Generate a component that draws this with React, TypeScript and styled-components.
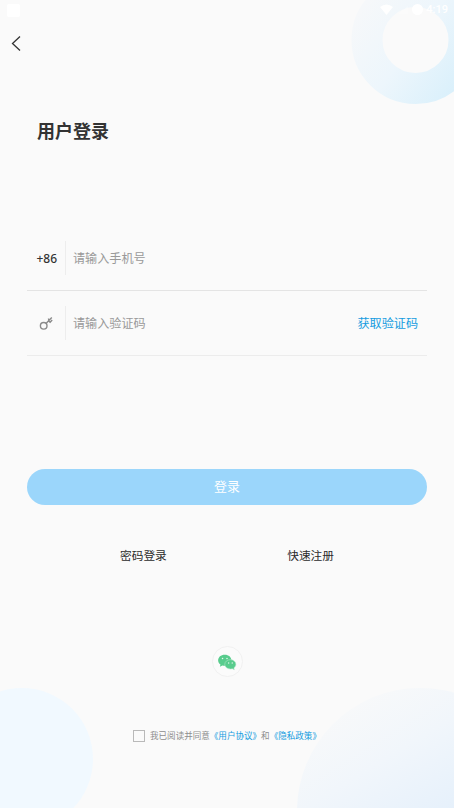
import React from 'react';
import styled, { createGlobalStyle } from 'styled-components';

const GlobalStyle = createGlobalStyle`
  * { box-sizing: border-box; }
  body {
    margin: 0;
    background: #fafafa;
    font-family: 'Noto Sans CJK SC', 'Noto Sans', sans-serif;
  }
  button, input { font-family: inherit; }
`;

const Screen = styled.main`
  position: relative;
  width: 100%;
  height: 808px;
  overflow: hidden;
  display: flex;
  flex-direction: column;
  background: #fafafa;
  color: #333;
`;

const Backdrop = styled.svg`
  position: absolute;
  inset: 0;
  pointer-events: none;
`;

const StatusBar = styled.header`
  position: relative;
  height: 20px;
  padding: 0 6px 0 7px;
  display: flex;
  align-items: center;
  justify-content: space-between;
  color: #fff;
`;

const AppBadge = styled.span`
  width: 13px;
  height: 13px;
  border-radius: 2px;
  background: #fff;
`;

const StatusIcons = styled.div`
  display: flex;
  align-items: center;
  font: 500 11px/18px Roboto, sans-serif;
`;

const NavBar = styled.nav`
  position: relative;
  height: 46px;
  padding: 15px 0 0 10px;
`;

const BackButton = styled.button`
  display: block;
  padding: 0;
  border: 0;
  background: none;
  line-height: 0;
  color: #333;
`;

const Title = styled.h1`
  position: relative;
  margin: 50px 0 0 37px;
  font-size: 18px;
  line-height: 28px;
  font-weight: 700;
`;

const Form = styled.form`
  position: relative;
  margin: 82px 27px 0;
`;

const Field = styled.div<{ $line: string }>`
  height: 65px;
  display: flex;
  align-items: center;
  border-bottom: 1px solid ${(p) => p.$line};
`;

const Prefix = styled.div`
  width: 39px;
  height: 34px;
  padding: 1px 0 0 9.500px;
  display: flex;
  align-items: center;
  border-right: 1px solid #ededed;
  font: 500 12px/18px 'Noto Sans', sans-serif;
`;

const Input = styled.input`
  flex: 1;
  min-width: 0;
  height: 34px;
  padding: 0 7px 2px;
  border: 0;
  outline: 0;
  background: none;
  font-size: 12.1px;
  color: #333;
  &::placeholder { color: #999; opacity: 1; }
`;

const CodeButton = styled.button`
  padding: 0 9px 0 0;
  border: 0;
  background: none;
  font-size: 12.1px;
  line-height: 18px;
  color: #159ce0;
`;

const LoginButton = styled.button`
  display: block;
  width: 100%;
  height: 36px;
  margin-top: 113px;
  padding: 0 0 3px;
  border: 0;
  border-radius: 18px;
  background: #9bd6fb;
  color: #fff;
  font-size: 13px;
`;

const Alternatives = styled.div`
  position: relative;
  margin: 40px 120px 0;
  display: flex;
  justify-content: space-between;
`;

const TextLink = styled.a`
  font-size: 11.7px;
  line-height: 20px;
  color: #2b2b2b;
`;

const WechatButton = styled.button`
  position: relative;
  align-self: center;
  width: 31px;
  height: 31px;
  margin-top: 81px;
  padding: 0;
  display: grid;
  place-items: center;
  border: 1px solid #f1f1f1;
  border-radius: 50%;
  background: #fbfbfb;
`;

const Agreement = styled.div`
  position: relative;
  margin: 50px 0 0 133px;
  height: 18px;
  display: flex;
  align-items: center;
  white-space: nowrap;
`;

const Checkbox = styled.span`
  width: 12px;
  height: 12px;
  margin-right: 5px;
  border: 1px solid #b9b9b9;
`;

const AgreementText = styled.span`
  padding-bottom: 2px;
  font-size: 8.55px;
  line-height: 14px;
  color: #8e8e8e;
`;

const PolicyLink = styled.a`
  color: #159ce0;
`;

const Decorations = () => (
  <Backdrop width="454" height="808" viewBox="0 0 454 808">
    <defs>
      <linearGradient id="ring" gradientUnits="userSpaceOnUse" x1="362" y1="8" x2="462" y2="80">
        <stop offset="0" stopColor="#f6f8fa" />
        <stop offset="0.5" stopColor="#edf6fc" />
        <stop offset="1" stopColor="#daf0fb" />
      </linearGradient>
      <linearGradient id="corner" gradientUnits="userSpaceOnUse" x1="350" y1="700" x2="430" y2="830">
        <stop offset="0" stopColor="#f8f9fa" />
        <stop offset="0.45" stopColor="#f1f6fb" />
        <stop offset="1" stopColor="#e5f0fb" />
      </linearGradient>
    </defs>
    <circle cx="415.5" cy="40" r="48.5" fill="none" stroke="url(#ring)" strokeWidth="31" />
    <circle cx="22" cy="759" r="71" fill="#f1f9ff" />
    <circle cx="420" cy="811" r="123" fill="url(#corner)" />
  </Backdrop>
);

const SignalIcons = () => (
  <svg width="47" height="18" viewBox="0 0 47 18" fill="currentColor">
    <path d="M1 6Q7.500 1 14 6L7.500 14Z" />
    <path d="M19 13H29V5Z" opacity="0.3" />
    <circle cx="38.500" cy="8.500" r="5.500" />
  </svg>
);

const BackIcon = () => (
  <svg width="12" height="17" viewBox="0 0 12 17" fill="none" stroke="currentColor" strokeWidth="1.300">
    <path d="M10 1.500L2.500 8.500L10 15.500" />
  </svg>
);

const KeyIcon = () => (
  <svg width="18" height="18" viewBox="0 0 18 18" fill="none" stroke="#8a8a8a" strokeWidth="1.400">
    <circle cx="6.700" cy="10.800" r="3.300" />
    <path d="M9 8.400L14.800 2.600M11.500 5.800L13.100 7.200L15.200 5M11.800 5.500L11.500 3.500" />
  </svg>
);

const WechatIcon = () => (
  <svg width="20" height="18" viewBox="0.500 0.500 18 16.200">
    <path d="M7.500 2C3.900 2 1.500 4.200 1.500 7C1.500 8.600 2.300 9.900 3.600 10.800L3.100 12.800L5.400 11.700C6.100 11.900 6.800 12 7.500 12C11 12 13.500 9.800 13.500 7S11 2 7.500 2Z" fill="#58cc8d" />
    <path d="M12.500 6.500C9.600 6.500 7.500 8.400 7.500 10.700S9.600 14.900 12.500 14.900C13.100 14.900 13.700 14.800 14.200 14.600L16.100 15.500L15.700 13.900C16.900 13.100 17.500 12 17.500 10.700C17.500 8.400 15.300 6.500 12.500 6.500Z" fill="#58cc8d" stroke="#b5e8cb" strokeWidth="0.500" />
    <g fill="#e7f8ee">
      <circle cx="5.500" cy="5.500" r="0.700" />
      <circle cx="9.500" cy="5.500" r="0.700" />
      <circle cx="11" cy="9.500" r="0.600" />
      <circle cx="14.200" cy="9.500" r="0.600" />
    </g>
  </svg>
);

export default function App() {
  return (
    <Screen>
      <GlobalStyle />
      <Decorations />
      <StatusBar>
        <AppBadge />
        <StatusIcons><SignalIcons />4:19</StatusIcons>
      </StatusBar>
      <NavBar>
        <BackButton aria-label="返回"><BackIcon /></BackButton>
      </NavBar>
      <Title>用户登录</Title>
      <Form onSubmit={(e) => e.preventDefault()}>
        <Field $line="#e4e4e4">
          <Prefix>+86</Prefix>
          <Input type="tel" placeholder="请输入手机号" />
        </Field>
        <Field $line="#ececec">
          <Prefix><KeyIcon /></Prefix>
          <Input placeholder="请输入验证码" />
          <CodeButton type="button">获取验证码</CodeButton>
        </Field>
        <LoginButton>登录</LoginButton>
      </Form>
      <Alternatives>
        <TextLink>密码登录</TextLink>
        <TextLink>快速注册</TextLink>
      </Alternatives>
      <WechatButton aria-label="微信登录"><WechatIcon /></WechatButton>
      <Agreement>
        <Checkbox />
        <AgreementText>
          我已阅读并同意<PolicyLink>《用户协议》</PolicyLink>和<PolicyLink>《隐私政策》</PolicyLink>
        </AgreementText>
      </Agreement>
    </Screen>
  );
}
